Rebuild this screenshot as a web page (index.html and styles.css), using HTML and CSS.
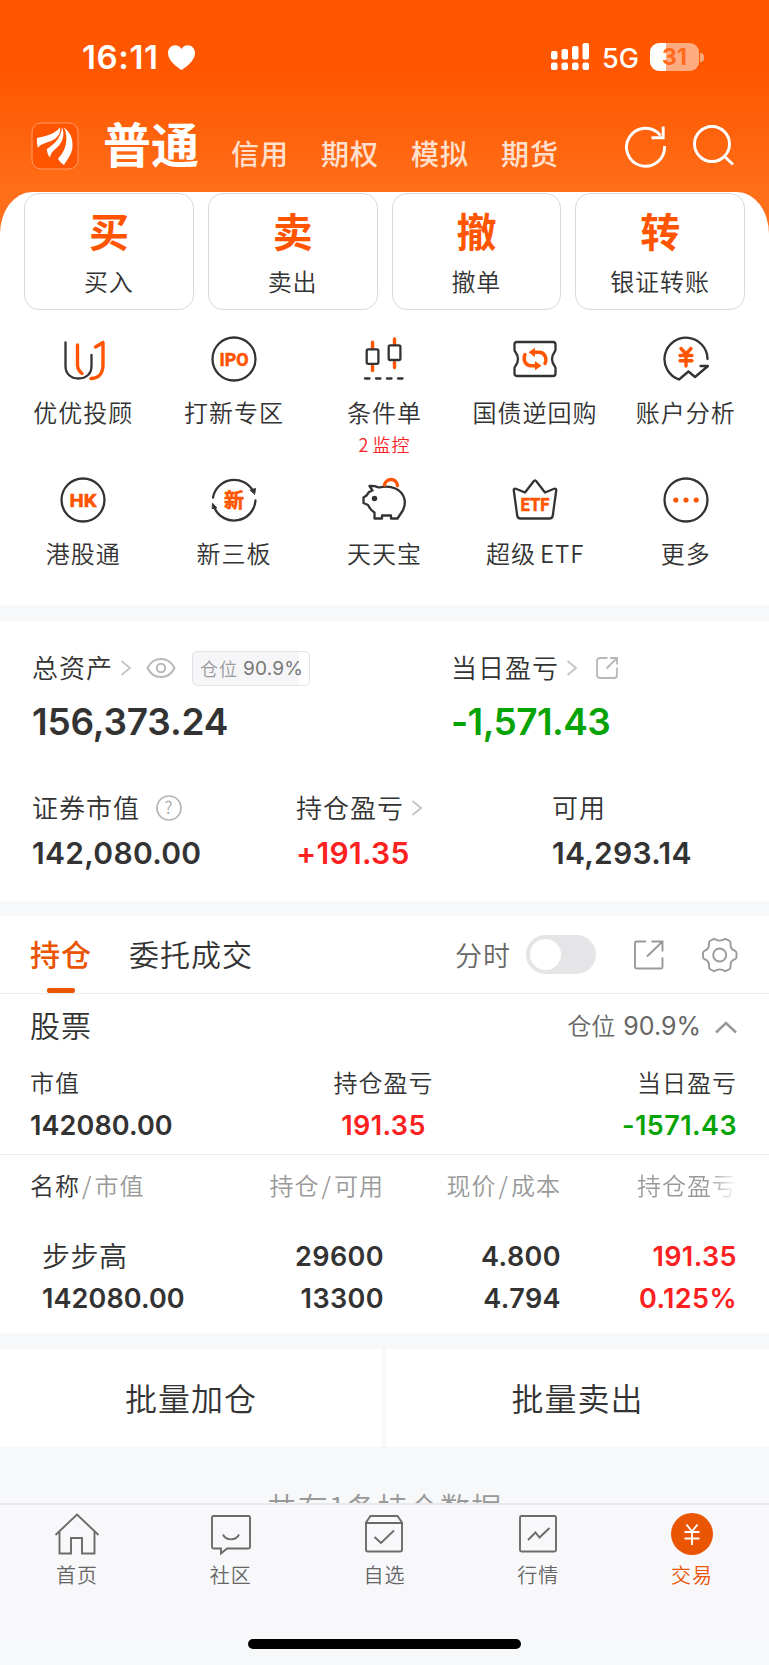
FILE: index.html
```html
<!DOCTYPE html>
<html lang="zh-CN">
<head>
    <meta charset="UTF-8">
    <meta name="viewport" content="width=device-width, initial-scale=1.0">
    <title>交易</title>
    <link rel="stylesheet" href="styles.css">
</head>
<body>
<div class="page">
    <div class="header">
        <div class="status">
            <span class="time">16:11</span>
            <svg class="heart" width="27" height="25" viewBox="0 0 27 25"><path d="M13.500 25C11 23.500 0 16.500 0 8.300C0 3.500 3.300 0.300 7.200 0.300C10 0.300 12.200 1.700 13.500 4C14.800 1.700 17 0.300 19.800 0.300C23.700 0.300 27 3.500 27 8.300C27 16.500 16 23.500 13.500 25Z" fill="#fff"/></svg>
            <svg class="signal" width="38" height="28" viewBox="0 0 38 28" fill="#fff">
                <rect x="0" y="8" width="6.500" height="8.500" rx="2"/><rect x="10.500" y="6" width="6.500" height="10.500" rx="2"/><rect x="21" y="3" width="6.500" height="13.500" rx="2"/><rect x="31.500" y="0" width="6.500" height="16.500" rx="2"/>
                <rect x="0" y="19.500" width="6.500" height="7.500" rx="2"/><rect x="10.500" y="19.500" width="6.500" height="7.500" rx="2"/><rect x="21" y="19.500" width="6.500" height="7.500" rx="2"/><rect x="31.500" y="19.500" width="6.500" height="7.500" rx="2"/>
            </svg>
            <span class="net">5G</span>
            <span class="battery">31</span><span class="nub"></span>
        </div>
        <div class="nav">
            <svg class="logo" width="48" height="48" viewBox="0 0 48 48">
                <rect x="1" y="1" width="46" height="46" rx="9" fill="#ff5500" stroke="#ff9a66" stroke-width="1"/>
                <g fill="#fff"><path d="M6 16C15 14 24 12 29 5.500C30 11 27 16 20 19C14 21.500 9 22 7 26C6 22.500 5.600 19 6 16Z"/><path d="M31 5C34 12 32 20 26.500 25C23 28.500 20 30 19 35.500C17 33.500 16 30 15.800 27C22 23 30 17 31 5Z"/><path d="M33 5.500C39 10 42 16 41.500 25C41 32 36 38 33 43C30 41 28 39 27 36.500C35 29 38 16 33 5.500Z"/></g>
            </svg>
            <span class="nav-on">普通</span>
            <span class="nav-item">信用</span>
            <span class="nav-item">期权</span>
            <span class="nav-item">模拟</span>
            <span class="nav-item">期货</span>
            <svg class="refresh" width="42" height="44" viewBox="0 0 42 44" fill="none" stroke="#fff" stroke-width="2.900"><path d="M39.500 22A19 19 0 1 1 35.500 11.500"/><path d="M38.200 2.500V13.700H26.500"/></svg>
            <svg class="search" width="42" height="44" viewBox="0 0 42 44" fill="none" stroke="#fff" stroke-width="2.900"><circle cx="19" cy="20" r="17.500"/><path d="M31.500 32.500L40 40.500"/></svg>
        </div>
    </div>

    <div class="sheet">
        <div class="cards">
            <div class="card"><b>买</b><span>买入</span></div>
            <div class="card"><b>卖</b><span>卖出</span></div>
            <div class="card"><b>撤</b><span>撤单</span></div>
            <div class="card"><b>转</b><span>银证转账</span></div>
        </div>
        <div class="menu">
            <div class="item">
                <svg width="46" height="46" viewBox="0 0 46 46" class="ico"><path d="M5.500 6.500V30C5.500 38 11 42.500 18.500 42.500C26 42.500 31.500 38 31.500 30V19"/><path class="o" d="M17.500 9V29C17.500 33 19 35 22 37.500M35.500 11L43 6.500V29C43 38 38 42.200 31 42.500"/></svg>
                <span>优优投顾</span>
            </div>
            <div class="item">
                <svg width="46" height="46" viewBox="0 0 46 46" class="ico"><circle cx="23" cy="23" r="21.500"/><text x="23" y="29.700" class="t" font-size="19" textLength="29" lengthAdjust="spacingAndGlyphs">IPO</text></svg>
                <span>打新专区</span>
            </div>
            <div class="item">
                <svg width="46" height="46" viewBox="0 0 46 46" class="ico"><path class="o" d="M11.500 6.300V12M11.500 30V34.500M33.500 3V8.500M33.500 26.500V31.500"/><rect x="5.700" y="13.300" width="11.700" height="14.500" rx="1.500"/><rect x="27.700" y="9.300" width="11.700" height="14.700" rx="1.500"/><path d="M4 42.500H8.500M15 42.500H19.500M26 42.500H30.500M37 42.500H41.500"/></svg>
                <span>条件单</span>
                <em>2 监控</em>
            </div>
            <div class="item">
                <svg width="46" height="46" viewBox="0 0 46 46" class="ico"><path d="M5 6H41C43 6 43.500 7 43.500 8.500V14C43.500 16 40 17.500 40 23C40 28.500 43.500 30 43.500 32V37.500C43.500 39 43 40 41 40H5C3 40 2.500 39 2.500 37.500V32C2.500 30 6 28.500 6 23C6 17.500 2.500 16 2.500 14V8.500C2.500 7 3 6 5 6Z"/><path class="o" d="M13 18.500C10.500 24 13.500 29.700 19 29.700H24M33 27.500C35.500 22 32.500 16.300 27 16.300H22"/><path class="of" d="M23 11.700V20.900L16.500 16.300ZM23 25.100V34.300L29.500 29.700Z"/></svg>
                <span>国债逆回购</span>
            </div>
            <div class="item">
                <svg width="46" height="46" viewBox="0 0 46 46" class="ico"><path d="M44.500 23A21.500 21.500 0 1 0 16 43.500L25.500 35.500L32 41L45 30H37.500"/><path class="o" d="M18 12.500L23 18L28 12.500M17 19.500H29M17 24.700H29M23 18.500V30"/></svg>
                <span>账户分析</span>
            </div>
            <div class="item">
                <svg width="46" height="46" viewBox="0 0 46 46" class="ico"><circle cx="23" cy="23" r="21.500"/><text x="23" y="29.700" class="t" font-size="19" textLength="27" lengthAdjust="spacingAndGlyphs">HK</text></svg>
                <span>港股通</span>
            </div>
            <div class="item">
                <svg width="46" height="46" viewBox="0 0 46 46" class="ico"><path d="M2 20.500A21.500 21.500 0 0 1 42 14M44.500 23.500A21.500 21.500 0 0 1 3.500 31"/><path class="kf" d="M39.500 13L44.500 11.500L43.700 17ZM1.800 26.500L5.800 31L1.500 31.500Z" stroke-width="1"/><text x="23" y="30.500" class="t cn" font-size="20">新</text></svg>
                <span>新三板</span>
            </div>
            <div class="item">
                <svg width="46" height="46" viewBox="0 0 46 46" class="ico"><path d="M8.500 9C13 8.500 16.500 10 18 10.500C24 9 30 9.500 34.500 11.500C44 16 46 26 41.500 34L36.500 41.500H30V38.500H21V41.500H13.500V35.500C10 33.500 8.500 31 7 28L2.500 26V20.500L5.500 18.500L8 15L11.500 13.500Z"/><circle class="kf" cx="13.500" cy="21.500" r="1.600"/><path class="o" d="M23.500 8C25 0.500 35.500 0.500 36.500 8.500"/></svg>
                <span>天天宝</span>
            </div>
            <div class="item">
                <svg width="46" height="46" viewBox="0 0 46 46" class="ico"><path d="M1.800 13.500C1.500 11.500 3 11.300 4.500 12L13 15.500L21.500 4.500C22.500 3 23.500 3 24.500 4.500L33 15.500L41.500 12C43 11.300 44.500 11.500 44.200 13.500L40.800 38.500C40.500 40.500 39.500 41.500 37.500 41.500H8.500C6.500 41.500 5.500 40.500 5.200 38.500Z"/><text x="23" y="33.800" class="t" font-size="19" textLength="29" lengthAdjust="spacingAndGlyphs">ETF</text></svg>
                <span>超级<i class="latin">ETF</i></span>
            </div>
            <div class="item">
                <svg width="46" height="46" viewBox="0 0 46 46" class="ico"><circle cx="23" cy="23" r="21.500"/><g class="of"><circle cx="12.800" cy="23" r="2.600"/><circle cx="23" cy="23" r="2.600"/><circle cx="33.200" cy="23" r="2.600"/></g></svg>
                <span>更多</span>
            </div>
        </div>
    </div>

    <div class="assets">
        <div class="two">
            <div>
                <div class="label"><span>总资产</span>
                    <svg class="chev" width="12" height="18" viewBox="0 0 12 18"><path d="M1.500 2L10 9L1.500 16"/></svg>
                    <svg class="eye" width="30" height="22" viewBox="0 0 30 22" fill="none" stroke="#b8b8b8" stroke-width="2"><path d="M1.500 11C4 6 9 2 15 2C21 2 26 6 28.500 11C26 16 21 20 15 20C9 20 4 16 1.500 11Z"/><circle cx="15" cy="11" r="4.200"/></svg>
                    <div class="badge">仓位<i>90.9%</i></div>
                </div>
                <div class="big">156,373.24</div>
            </div>
            <div>
                <div class="label"><span>当日盈亏</span>
                    <svg class="chev" width="12" height="18" viewBox="0 0 12 18"><path d="M1.500 2L10 9L1.500 16"/></svg>
                    <svg class="share" width="24" height="24" viewBox="0 0 24 24" fill="none" stroke="#b8b8b8" stroke-width="1.800"><path d="M12.500 2H5C3 2 2 3 2 5V19C2 21 3 22 5 22H19C21 22 22 21 22 19V11.500M15 2H22V8.500M22 2L11.500 12.500"/></svg>
                </div>
                <div class="big green">-1,571.43</div>
            </div>
        </div>
        <div class="three">
            <div>
                <div class="label"><span>证券市值</span>
                    <svg class="help" width="26" height="26" viewBox="0 0 26 26"><circle cx="13" cy="13" r="12" fill="none" stroke="#b3b3b3" stroke-width="1.700"/><text x="13" y="19" font-size="17" text-anchor="middle" fill="#aaa">?</text></svg>
                </div>
                <div class="mid">142,080.00</div>
            </div>
            <div>
                <div class="label"><span>持仓盈亏</span>
                    <svg class="chev" width="12" height="18" viewBox="0 0 12 18"><path d="M1.500 2L10 9L1.500 16"/></svg>
                </div>
                <div class="mid red">+191.35</div>
            </div>
            <div>
                <div class="label"><span>可用</span></div>
                <div class="mid">14,293.14</div>
            </div>
        </div>
    </div>

    <div class="tabs">
        <div class="tab on">持仓</div>
        <div class="tab">委托成交</div>
        <span class="minute">分时</span>
        <span class="switch"></span>
        <svg class="out" width="32" height="32" viewBox="0 0 32 32" fill="none" stroke="#999" stroke-width="1.900"><path d="M13 2.500H3.500Q2 2.500 2 4V28Q2 29.500 3.500 29.500H28Q29.500 29.500 29.500 28V18.500M18.500 2.500H29.500V12.500M29.500 2.500L14 17.500"/></svg>
        <svg class="gear" width="37" height="36" viewBox="0 0 37 36" fill="none" stroke="#999" stroke-width="1.900" stroke-linejoin="round"><path d="M13 1.800L9.500 3.500Q7.800 4.300 8 6.500Q8.500 12 3.500 13.800Q2 14.500 2 16V20Q2 21.500 3.500 22.200Q8.500 24 8 29.500Q7.800 31.700 9.500 32.500L13 34.200Q18.700 30.500 24.400 34.200L28 32.500Q29.700 31.700 29.500 29.500Q29 24 34 22.200Q35.500 21.500 35.500 20V16Q35.500 14.500 34 13.800Q29 12 29.500 6.500Q29.700 4.300 28 3.500L24.400 1.800Q18.700 5.500 13 1.800Z"/><circle cx="18.700" cy="18" r="6.500"/></svg>
    </div>

    <div class="stock">
        <div class="stock-top">
            <span class="stock-name">股票</span>
            <div class="pos"><span>仓位</span><i>90.9%</i></div>
            <svg width="22" height="14" viewBox="0 0 22 14" fill="none" stroke="#999" stroke-width="2.600"><path d="M1 12.500L11 3L21 12.500"/></svg>
        </div>
        <div class="sum">
            <div><span>市值</span><b>142080.00</b></div>
            <div class="c"><span>持仓盈亏</span><b class="red">191.35</b></div>
            <div class="r"><span>当日盈亏</span><b class="green">-1571.43</b></div>
        </div>
    </div>

    <div class="list">
        <div class="row head"><span><strong>名称</strong><s>/</s>市值</span><span>持仓<s>/</s>可用</span><span>现价<s>/</s>成本</span><span class="fade">持仓盈亏</span></div>
        <div class="row data">
            <div><span class="name">步步高</span><b>142080.00</b></div>
            <div><b>29600</b><b>13300</b></div>
            <div><b>4.800</b><b>4.794</b></div>
            <div class="red"><b>191.35</b><b>0.125%</b></div>
        </div>
    </div>

    <div class="batch">
        <div>批量加仓</div>
        <div>批量卖出</div>
    </div>
    <div class="count">共有1条持仓数据</div>

    <div class="tabbar">
        <div class="tb">
            <svg width="46" height="44" viewBox="0 0 46 44"><path d="M1.500 23L23 2.500L44.500 23M5.500 20V41.500H17V26H28V41.500H40.500V20"/></svg>
            <span>首页</span>
        </div>
        <div class="tb">
            <svg width="46" height="44" viewBox="0 0 46 44"><path d="M5.500 4H40.500Q42 4 42 5.500V35Q42 36.500 40.500 36.500H19L13 41.500V36.500H5.500Q4 36.500 4 35V5.500Q4 4 5.500 4ZM15 22.500C18 29 28 29 31 22.500"/></svg>
            <span>社区</span>
        </div>
        <div class="tb">
            <svg width="46" height="44" viewBox="0 0 46 44"><path d="M9.500 4H36.500L41 10.500V37.500Q41 39.500 39 39.500H7Q5 39.500 5 37.500V10.500ZM5 11H41M13.500 25L20 31L33 18.500"/></svg>
            <span>自选</span>
        </div>
        <div class="tb">
            <svg width="46" height="44" viewBox="0 0 46 44"><rect x="5" y="4" width="36" height="35.500" rx="1.500"/><path d="M13 28L20.500 20.500L24.500 25.500L34.500 16"/></svg>
            <span>行情</span>
        </div>
        <div class="tb active">
            <svg width="46" height="44" viewBox="0 0 46 44"><circle cx="23" cy="22" r="21"/><path d="M17.500 12.500L23 19.500L28.500 12.500M15.500 20H30.500M15.500 26.500H30.500M23 19.500V33"/></svg>
            <span>交易</span>
        </div>
    </div>
    <div class="home"></div>
</div>
</body>
</html>
```
FILE: styles.css
```css
* {
    box-sizing: border-box;
}
body {
    margin: 0;
    background: #f7f8fa;
    color: #333;
    font-family: "Noto Sans CJK SC", sans-serif;
    font-weight: 350;
}
i, em, s {
    font-style: normal;
    text-decoration: none;
}
svg {
    display: block;
    flex: none;
}
.page {
    width: 769px;
    height: 1665px;
    overflow: hidden;
    display: flex;
    flex-direction: column;
}
.page > div {
    flex: none;
}
.red { color: #fd2020; }
.green { color: #06a305; }

/* header */
.header {
    height: 240px;
    background: linear-gradient(#ff5700 0, #ff5700 75px, #ff6e19 192px, #ff6e19 100%);
    color: #fff;
}
.status {
    height: 114px;
    padding-left: 82px;
    display: flex;
    align-items: center;
    font-family: Inter, sans-serif;
}
.time {
    width: 86px;
    font-size: 33px;
    font-weight: 600;
    letter-spacing: 0.6px;
}
.signal {
    margin: 0 13px 0 356px;
}
.net {
    width: 48px;
    font-size: 27px;
    font-weight: 450;
    padding-top: 3px;
}
.battery {
    width: 49px;
    height: 28px;
    border-radius: 9px;
    background: linear-gradient(90deg, #fff 16px, #ffab80 16px);
    color: #ff6a1d;
    font-size: 23px;
    font-weight: 700;
    line-height: 28px;
    text-align: center;
}
.nub {
    width: 4px;
    height: 9px;
    margin-left: 1px;
    border-radius: 0 4px 4px 0;
    background: #ffab80;
}
.nav {
    height: 78px;
    padding-left: 31px;
    display: flex;
    align-items: flex-start;
    white-space: nowrap;
}
.logo {
    margin-top: 8px;
}
.nav-on {
    width: 128px;
    margin-left: 24px;
    font-size: 48px;
    font-weight: 700;
    line-height: 56px;
}
.nav-item {
    width: 90px;
    font-size: 28px;
    font-weight: 500;
    letter-spacing: 1px;
    line-height: 78px;
    color: #ffe0cf;
}
.refresh {
    margin: 10px 26px 0 34px;
}
.search {
    margin-top: 10px;
}

/* trade entrances */
.sheet {
    height: 413px;
    margin-top: -48px;
    background: #fff;
    border-radius: 32px 32px 0 0 / 42px 42px 0 0;
}
.cards {
    padding: 1px 24px 0;
    display: grid;
    grid-template-columns: repeat(4, 1fr);
    gap: 14px;
}
.card {
    height: 117px;
    border: 1px solid #d9d9d9;
    border-radius: 15px;
    display: flex;
    flex-direction: column;
    align-items: center;
}
.card b {
    margin-top: 10px;
    height: 58px;
    font-size: 40px;
    line-height: 58px;
    color: #ff5500;
}
.card span {
    margin-top: 2px;
    font-size: 24px;
    letter-spacing: 1px;
    line-height: 34px;
}
.menu {
    padding: 26px 8px 0;
    display: grid;
    grid-template-columns: repeat(5, 1fr);
    grid-template-rows: 141px 141px;
}
.item {
    display: flex;
    flex-direction: column;
    align-items: center;
}
.item span {
    margin-top: 12px;
    font-size: 24px;
    letter-spacing: 1px;
    line-height: 36px;
}
.latin {
    margin-left: 4px;
}
.item em {
    font-size: 18px;
    letter-spacing: 1px;
    word-spacing: -2px;
    line-height: 28px;
    color: #fb1d24;
}
.ico {
    fill: none;
    stroke: #333;
    stroke-width: 2.3px;
    stroke-linecap: round;
    stroke-linejoin: round;
}
.ico .o {
    stroke: #ff5500;
    stroke-width: 3.4px;
}
.ico .of {
    fill: #ff5500;
    stroke: none;
}
.ico .kf {
    fill: #333;
}
.ico .t {
    fill: #ff5500;
    stroke: #ff5500;
    stroke-width: 0.6px;
    font-family: Roboto, sans-serif;
    font-weight: 700;
    text-anchor: middle;
}
.ico .cn {
    font-family: "Noto Sans CJK SC", sans-serif;
}

/* assets */
.assets {
    height: 280px;
    margin-top: 16px;
    padding: 24px 32px 0;
    background: #fff;
}
.two {
    height: 140px;
    display: grid;
    grid-template-columns: 419px 1fr;
}
.three {
    display: grid;
    grid-template-columns: 264px 256px 1fr;
}
.label {
    height: 46px;
    display: flex;
    align-items: center;
    font-size: 26px;
    letter-spacing: 1px;
    white-space: nowrap;
}
.label span {
    padding-bottom: 4px;
}
.chev {
    margin-left: 7px;
    fill: none;
    stroke: #c4c4c4;
    stroke-width: 1.8px;
}
.eye {
    margin-left: 14px;
}
.share {
    margin-left: 17px;
}
.help {
    margin-left: 16px;
}
.badge {
    height: 35px;
    margin-left: 16px;
    padding: 0 6px 0 7px;
    border: 1px solid #e3e4e8;
    border-radius: 5px;
    background: linear-gradient(90deg, #f6f6f9 106px, #fff 106px);
    display: flex;
    align-items: center;
    gap: 5px;
    font-size: 18px;
    color: #999;
}
.badge i {
    font: 19px Inter, sans-serif;
    letter-spacing: 0.2px;
    color: #777;
}
.big, .mid, b, .pos i {
    font-family: Inter, "Noto Sans CJK SC", sans-serif;
    font-weight: 600;
}
.big {
    margin-top: 7px;
    font-size: 37px;
    letter-spacing: -0.2px;
    line-height: 48px;
}
.big.green {
    letter-spacing: -0.6px;
}
.mid {
    padding-top: 1px;
    font-size: 30px;
    letter-spacing: 0.3px;
    line-height: 42px;
}

/* holding tabs */
.tabs {
    height: 78px;
    margin-top: 15px;
    padding: 0 31px 0 30px;
    border-bottom: 1px solid #eee;
    background: #fff;
    display: flex;
    align-items: center;
}
.tab {
    height: 77px;
    margin-right: 37px;
    font-size: 30px;
    letter-spacing: 1px;
    line-height: 75px;
}
.tab.on {
    display: flex;
    flex-direction: column;
    align-items: center;
    font-weight: 500;
    color: #ea5504;
}
.tab.on::after {
    content: "";
    width: 28px;
    height: 5px;
    margin-top: -3px;
    border-radius: 2px;
    background: #ea5504;
    flex: none;
}
.minute {
    margin-left: auto;
    font-size: 27px;
    letter-spacing: 1px;
    color: #666;
}
.switch {
    width: 70px;
    height: 39px;
    margin: 0 37px 0 15px;
    padding: 4px;
    border-radius: 20px;
    background: #e5e5e7;
}
.switch::before {
    content: "";
    display: block;
    width: 31px;
    height: 31px;
    border-radius: 50%;
    background: #fff;
}
.gear {
    margin-left: 36px;
}

.stock {
    height: 161px;
    padding: 0 32px 0 30px;
    border-bottom: 1px solid #ececec;
    background: #fff;
}
.stock-top {
    height: 66px;
    display: flex;
    align-items: center;
}
.stock-name {
    padding-bottom: 6px;
    font-size: 30px;
    letter-spacing: 1px;
    margin-right: auto;
}
.pos {
    margin-right: 14px;
    padding-bottom: 2px;
    display: flex;
    align-items: center;
    gap: 8px;
    font-size: 24px;
    color: #666;
}
.pos span {
    padding-bottom: 3px;
}
.pos i {
    font-size: 25px;
    font-weight: 400;
}
.sum {
    padding-top: 4px;
    display: grid;
    grid-template-columns: repeat(3, 1fr);
}
.sum div {
    display: flex;
    flex-direction: column;
}
.sum .c { align-items: center; }
.sum .r { align-items: flex-end; }
.sum span {
    font-size: 24px;
    letter-spacing: 1px;
    line-height: 36px;
}
.stock b, .list b {
    display: block;
    font-size: 27px;
    letter-spacing: 0.4px;
    line-height: 42px;
}
.stock div:first-child > b, .list div:first-child > b {
    letter-spacing: 0.1px;
}
.sum b {
    margin-top: 5px;
}

/* position list */
.list {
    height: 178px;
    padding: 0 32px 0 30px;
    background: #fff;
}
.row {
    display: grid;
    grid-template-columns: 177px 177px 177px 176px;
}
.row > * {
    text-align: right;
}
.row > :first-child {
    text-align: left;
}
.head {
    font-size: 24px;
    letter-spacing: 1px;
    line-height: 60px;
    color: #999;
}
.head strong {
    font-weight: inherit;
    color: #333;
}
.head s {
    margin: 0 2px;
}
.fade {
    background: linear-gradient(90deg, #999 148px, #fff 176px);
    -webkit-background-clip: text;
    background-clip: text;
    color: transparent;
}
.data {
    padding-top: 21px;
}
.data > :first-child {
    padding-left: 12px;
}
.name {
    display: block;
    margin-top: -2px;
    padding-bottom: 2px;
    font-size: 28px;
    letter-spacing: 0.5px;
    line-height: 42px;
}

.batch {
    height: 98px;
    margin-top: 16px;
    display: grid;
    grid-template-columns: 382px 383px;
    gap: 4px;
}
.batch div {
    background: #fff;
    text-align: center;
    font-size: 32px;
    letter-spacing: 1px;
    line-height: 97px;
}
.count {
    height: 56px;
    padding-top: 37px;
    overflow: hidden;
    text-align: center;
    font-size: 30px;
    letter-spacing: 1.2px;
    line-height: 44px;
    color: #999;
}

/* bottom bar */
.tabbar {
    height: 136px;
    padding-top: 7px;
    border-top: 2px solid #e9e9eb;
    background: #f8f8fb;
    display: grid;
    grid-template-columns: repeat(5, 1fr);
}
.tb {
    display: flex;
    flex-direction: column;
    align-items: center;
    font-size: 20px;
    letter-spacing: 1px;
    line-height: 30px;
    color: #666;
}
.tb svg {
    margin-bottom: 4px;
    fill: none;
    stroke: #6b6b6b;
    stroke-width: 1.9px;
}
.tb.active {
    color: #ea5504;
}
.active circle {
    fill: #ea5504;
    stroke: none;
}
.active path {
    stroke: #fff;
}
.home {
    width: 273px;
    height: 10px;
    margin: 0 auto;
    border-radius: 5px;
    background: #000;
}
```
